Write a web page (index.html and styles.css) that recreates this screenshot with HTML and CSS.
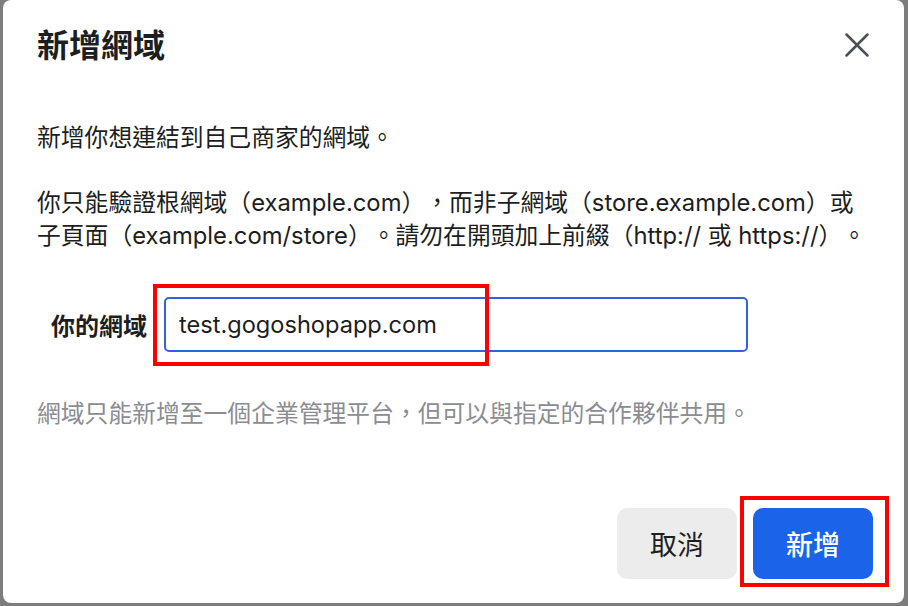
FILE: index.html
```
<!DOCTYPE html>
<html lang="zh-Hant">
<head>
<meta charset="utf-8">
<title>新增網域</title>
<link rel="stylesheet" href="styles.css">
</head>
<body>
<div class="modal">
  <div class="modal-header">
    <h1 class="modal-title">新增網域</h1>
    <button class="close-btn" aria-label="關閉">
      <svg width="24" height="24" viewBox="0 0 24 24" fill="none" stroke="#4b4f56" stroke-width="2.5" stroke-linecap="round">
        <path d="M1.5 1.5 L22.5 22.5 M22.5 1.5 L1.5 22.5"/>
      </svg>
    </button>
  </div>
  <div class="modal-body">
    <p class="para">新增你想連結到自己商家的網域。</p>
    <p class="para">你只能驗證根網域（example.com），而非子網域（store.example.com）或<br>子頁面（example.com/store）。請勿在開頭加上前綴（http:// 或 https://）。</p>
    <div class="field-row">
      <label class="field-label" for="domain">你的網域</label>
      <div class="field-wrap">
        <input id="domain" class="field-input" type="text" value="test.gogoshopapp.com">
        <span class="mark mark-input"></span>
      </div>
    </div>
    <p class="helper">網域只能新增至一個企業管理平台，但可以與指定的合作夥伴共用。</p>
  </div>
  <div class="modal-footer">
    <button class="btn btn-cancel">取消</button>
    <div class="btn-wrap">
      <button class="btn btn-primary">新增</button>
      <span class="mark mark-btn"></span>
    </div>
  </div>
</div>
</body>
</html>
```
FILE: styles.css
```
html, body {
  margin: 0;
  padding: 0;
}
body {
  width: 908px;
  height: 606px;
  background: #7d7d7d;
  padding: 0 4px 3px 3px;
  box-sizing: border-box;
  font-family: "Inter", "Noto Sans CJK TC", sans-serif;
  color: #1c1e21;
  overflow: hidden;
  text-spacing-trim: space-all;
}
.modal {
  width: 901px;
  height: 603px;
  background: #ffffff;
  border-radius: 8px;
  box-sizing: border-box;
  display: flex;
  flex-direction: column;
}
.modal-header {
  display: flex;
  align-items: flex-start;
  justify-content: space-between;
  padding: 23px 35px 0 34px;
}
.modal-title {
  margin: 0;
  font-size: 32px;
  line-height: 40px;
  font-weight: 700;
  color: #1c1e21;
  font-family: "Noto Sans CJK TC", sans-serif;
}
.close-btn {
  margin-top: 10px;
  width: 24px;
  height: 24px;
  padding: 0;
  border: 0;
  background: none;
  display: block;
}
.close-btn svg {
  display: block;
}
.modal-body {
  padding: 58px 34px 0 34px;
}
.para {
  margin: 0 0 32px 0;
  font-size: 23.8px;
  line-height: 33px;
  white-space: nowrap;
}
.field-row {
  display: flex;
  align-items: center;
  margin-top: 45px;
}
.field-label {
  width: 110px;
  text-align: right;
  font-size: 24px;
  font-weight: 700;
  margin-right: 17px;
  font-family: "Noto Sans CJK TC", sans-serif;
}
.field-wrap {
  position: relative;
}
.field-input {
  display: block;
  width: 584px;
  height: 55px;
  box-sizing: border-box;
  border: 2px solid #2f64d8;
  border-radius: 5px;
  padding: 0 13px;
  font-family: "Inter", "Noto Sans CJK TC", sans-serif;
  font-size: 23.6px;
  color: #1c1e21;
  outline: none;
  background: #fff;
}
.mark {
  position: absolute;
  border: 4px solid #ff0000;
  box-sizing: border-box;
  pointer-events: none;
}
.mark-input {
  left: -11px;
  top: -13px;
  width: 336px;
  height: 82px;
}
.helper {
  margin: 45px 0 0 0;
  font-size: 23.8px;
  line-height: 33px;
  color: #8a8d91;
}
.modal-footer {
  margin-top: auto;
  display: flex;
  justify-content: flex-end;
  gap: 16px;
  padding: 0 31px 24px 0;
}
.btn-wrap {
  position: relative;
}
.btn {
  display: block;
  width: 120px;
  height: 71px;
  border: 0;
  border-radius: 10px;
  font-family: "Noto Sans CJK TC", sans-serif;
  font-size: 27px;
  padding: 0;
}
.btn-cancel {
  background: #ececec;
  color: #1c1e21;
  font-weight: 400;
}
.btn-primary {
  background: #1b64e9;
  color: #ffffff;
  font-weight: 500;
}
.mark-btn {
  left: -13px;
  top: -12px;
  width: 149px;
  height: 91px;
}
```
